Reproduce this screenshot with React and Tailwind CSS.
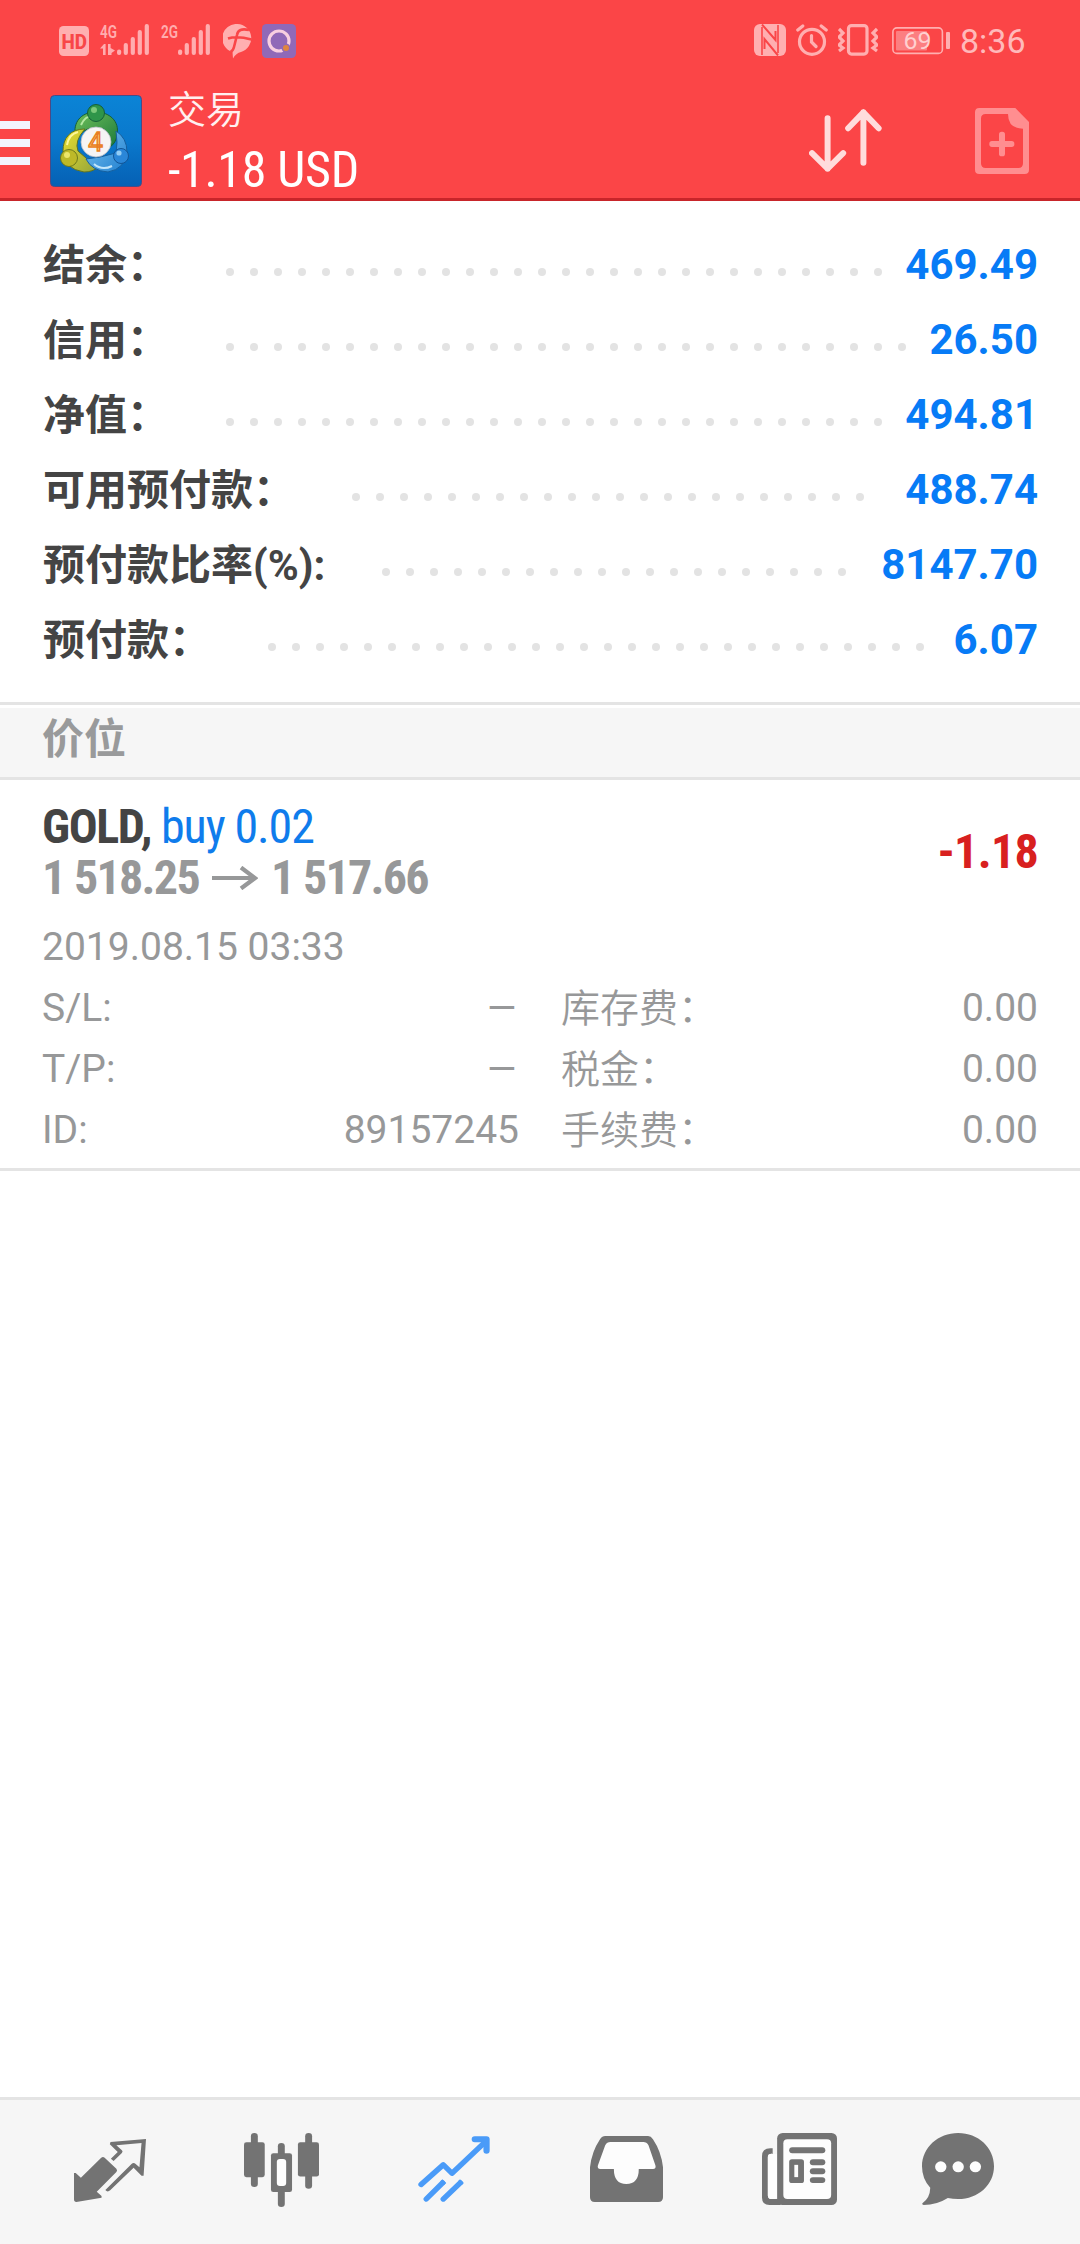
const account = [
  { label: "结余：", value: "469.49" },
  { label: "信用：", value: "26.50" },
  { label: "净值：", value: "494.81" },
  { label: "可用预付款：", value: "488.74" },
  { label: "预付款比率(%):", value: "8147.70" },
  { label: "预付款：", value: "6.07" },
];

const details = [
  { label: "S/L:", value: "–", feeLabel: "库存费：", fee: "0.00" },
  { label: "T/P:", value: "–", feeLabel: "税金：", fee: "0.00" },
  { label: "ID:", value: "89157245", feeLabel: "手续费：", fee: "0.00" },
];

const Signal = ({ label, data }) => (
  <svg viewBox="0 0 50 32" className="h-8 w-[50px] overflow-visible" fill="#ffadaf">
    <text
      x="0"
      y="14"
      fontSize="18"
      fontWeight="600"
      textLength="17"
      lengthAdjust="spacingAndGlyphs">
      {label}
    </text>
    {data && (
      <path d="M4 20l-4 4.500h3V31h2.600V20zM8 20h2.600v4l4.400 2.500-3.500 2.500V31H8z" />
    )}
    <rect x="17" y="25.500" width="4.200" height="5.500" rx="2" />
    <rect x="23.700" y="19" width="4.200" height="12" rx="2" />
    <rect x="30.700" y="13" width="4.200" height="18" rx="2" />
    <rect x="37.700" y="6" width="4.200" height="25" rx="2" />
    <rect x="44.700" y="0" width="4.200" height="31" rx="2" />
  </svg>
);

const StatusBar = () => (
  <div className="flex h-20 items-start pt-6">
    <svg viewBox="0 0 30 30" className="mt-0.5 ml-[59px] h-[30px] w-[30px]">
      <rect width="30" height="30" rx="4.500" fill="#ffafb0" />
      <text
        x="2.500"
        y="22.500"
        fontSize="21"
        fontWeight="800"
        fill="#f84648"
        textLength="25.500"
        lengthAdjust="spacingAndGlyphs">
        HD
      </text>
    </svg>
    <div className="ml-[11px]">
      <Signal label="4G" data />
    </div>
    <div className="ml-[11px]">
      <Signal label="2G" />
    </div>
    <svg viewBox="0 0 29 35" className="ml-3 h-[35px] w-[29px]">
      <path
        d="M14.500 0a14.300 14.300 0 0 1 3.500 28Q13 29 10 34.500L9.500 28A14.300 14.300 0 0 1 14.500 0z"
        fill="#ffafb0"
      />
      <path
        d="M26 6Q15 3.500 14 11L11 23Q10 27 7.500 28M5 14.500Q14 11.500 28.500 15.500"
        fill="none"
        stroke="#fa4648"
        strokeWidth="2.600"
      />
    </svg>
    <svg viewBox="0 0 34 34" className="ml-2.5 h-[34px] w-[34px]">
      <rect width="34" height="34" rx="4.500" fill="#9069b8" />
      <circle cx="17" cy="17" r="10" fill="none" stroke="#f8cfe0" strokeWidth="3.200" />
      <circle cx="24" cy="24" r="4.500" fill="#9069b8" />
      <circle cx="24" cy="24" r="3" fill="#e0863f" />
    </svg>

    <svg viewBox="0 0 32 32" className="ml-[458px] h-8 w-8">
      <rect width="32" height="32" rx="6" fill="#ffafb0" />
      <path
        d="M8 0.500L21.500 16V7M24 31.500L10.500 15V25"
        fill="none"
        stroke="#fa4648"
        strokeWidth="2"
      />
      <path
        d="M8 31V3M24 1V29"
        fill="none"
        stroke="#fa4648"
        strokeWidth="1.600"
      />
    </svg>
    <svg
      viewBox="0 0 32 32"
      className="ml-2.5 h-8 w-8"
      fill="none"
      stroke="#ffafb0"
      strokeWidth="3.200"
      strokeLinecap="round">
      <circle cx="16" cy="17.800" r="12.500" />
      <path d="M1.800 6L6.800 2M30.200 6L25.200 2M15.500 11.500V18l4.500 4.500" />
    </svg>
    <svg
      viewBox="0 0 40 32"
      className="ml-[10px] h-8 w-10"
      fill="none"
      stroke="#ffafb0"
      strokeWidth="3.200">
      <rect x="10.500" y="1.600" width="18.500" height="28.500" rx="3" />
      <path d="M1 5l4 4-4 4 4 4-4 4 4 3-4 3M39 5l-4 4 4 4-4 4 4 4-4 3 4 3" />
    </svg>
    <svg viewBox="0 0 58 28" className="mt-[3px] ml-3.5 h-7 w-[58px]">
      <rect
        x="0.900"
        y="0.900"
        width="49.500"
        height="25.500"
        rx="4"
        fill="none"
        stroke="#ffafb0"
        strokeWidth="1.600"
      />
      <rect x="4" y="4" width="31" height="19.500" rx="1" fill="#fc7f81" />
      <rect x="54" y="5" width="4" height="17" rx="1" fill="#ffafb0" />
      <text
        x="11.500"
        y="22"
        fontSize="24"
        fill="#ffd0d0"
        textLength="28"
        lengthAdjust="spacingAndGlyphs">
        69
      </text>
    </svg>
    <span className="ml-[10px] text-[34px] leading-[34px] text-[#ffb9ba]">8:36</span>
  </div>
);

const Logo = () => (
  <svg viewBox="0 0 92 92" className="mt-[15px] ml-5 h-[92px] w-[92px]">
    <defs>
      <linearGradient id="sky" x1="0" y1="0" x2="0" y2="1">
        <stop offset="0" stopColor="#0b84d6" />
        <stop offset="0.500" stopColor="#0a78cc" />
        <stop offset="1" stopColor="#0560b4" />
      </linearGradient>
      <linearGradient id="green" x1="0" y1="0" x2="1" y2="1">
        <stop offset="0" stopColor="#6fc05a" />
        <stop offset="1" stopColor="#1c7a3a" />
      </linearGradient>
      <linearGradient id="yellow" x1="0" y1="0" x2="1" y2="1">
        <stop offset="0" stopColor="#eadf2e" />
        <stop offset="1" stopColor="#93a43c" />
      </linearGradient>
      <linearGradient id="blue" x1="0" y1="0" x2="1" y2="1">
        <stop offset="0" stopColor="#7cc4f0" />
        <stop offset="1" stopColor="#1f7fd0" />
      </linearGradient>
    </defs>
    <rect x="0.500" y="0.500" width="91" height="91" rx="4" fill="url(#sky)" stroke="#4a4a86" />
    <path
      d="M25 38C24 25 33 17 46 17S70 26 67 40Q66 48 60 52L54 34H38L30 38z"
      fill="url(#green)"
      stroke="#155f38"
    />
    <path
      d="M35 34C20 34 13 43 13 56Q14 74 34 77Q43 77 48 72L36 63 28 56Q24 46 35 34z"
      fill="url(#yellow)"
      stroke="#5f7322"
    />
    <path
      d="M66 36Q77 43 77 57Q75 74 58 77Q42 76 36 64L50 62 66 58Q68 48 66 36z"
      fill="url(#blue)"
      stroke="#155f9e"
    />
    <path d="M31 30Q35 21 42 21" fill="none" stroke="#b5e8a2" strokeWidth="2" />
    <path d="M17 50Q19 39 28 37" fill="none" stroke="#fdf79a" strokeWidth="2" />
    <path d="M44 69Q52 76 62 71" fill="none" stroke="#c3e6fb" strokeWidth="2" />
    <circle cx="46" cy="18" r="8.500" fill="#2f9549" stroke="#155f38" />
    <circle cx="44" cy="15" r="3" fill="#7cc97a" />
    <circle cx="19" cy="63" r="8.500" fill="#bdb928" stroke="#6f7a1c" />
    <circle cx="17" cy="60" r="3" fill="#ece66a" />
    <circle cx="71" cy="61" r="7.500" fill="#2a86d8" stroke="#125596" />
    <circle cx="69" cy="58" r="2.600" fill="#93cdf5" />
    <circle cx="46" cy="47" r="15" fill="#f6f4f4" stroke="#b9bdc4" strokeWidth="0.800" />
    <text
      x="45.500"
      y="56"
      fontSize="26"
      textAnchor="middle"
      fill="#fbcf7c"
      stroke="#e97e22"
      strokeWidth="1.400">
      4
    </text>
  </svg>
);

const Header = () => (
  <header className="h-[201px] border-b-[3px] border-[#c8252a] bg-[#fb4547]">
    <StatusBar />
    <div className="flex items-start">
      <div className="mt-[41px] flex w-[30px] flex-col gap-2.5">
        <span className="h-2 bg-[#f3f3fd]" />
        <span className="h-2 bg-[#f3f3fd]" />
        <span className="h-2 bg-[#f3f3fd]" />
      </div>
      <Logo />
      <div className="mt-2 ml-[26px] w-[641px]">
        <div className="text-[38px] leading-[44px] font-[350] text-[#fff0f0]">交易</div>
        <div className="mt-[13px] text-[50px] leading-[50px] tracking-[-0.3px] text-white [font-stretch:75%]">
          -1.18 USD
        </div>
      </div>
      <svg
        viewBox="268 326 220 190"
        className="mt-[29px] h-[63px] w-[73px]"
        fill="none"
        stroke="#ffdcdc"
        strokeWidth="18"
        strokeLinecap="round"
        strokeLinejoin="round">
        <path d="M324 354V506M277 459L324 506 371 459M432 488V336M386 384L432 336 478 384" />
      </svg>
      <svg viewBox="765 324 162 198" className="mt-7 ml-[93px] h-[66px] w-[54px]" fill="#ff8e90">
        <path
          fillRule="evenodd"
          d="M778 324H886L927 366V509Q927 522 914 522H778Q765 522 765 509V337Q765 324 778 324ZM797 342Q783 342 783 356V490Q783 504 797 504H895Q909 504 909 490V386Q864 386 864 342Z"
        />
        <rect x="808" y="423" width="75" height="18" rx="8" />
        <rect x="837" y="395" width="18" height="74" rx="8" />
      </svg>
    </div>
  </header>
);

const AccountRow = ({ label, value }) => (
  <div className="flex h-[75px] items-center text-[42px] leading-[75px] font-bold">
    <span className="mt-0.5 text-[#444]">{label}</span>
    <div className="mt-3.5 mr-[22px] ml-[57px] flex h-2 flex-1 flex-wrap gap-x-4 overflow-hidden">
      {Array.from({ length: 30 }, (_, i) => (
        <span key={i} className="size-2 rounded-full bg-[#e3e3e3]" />
      ))}
    </div>
    <span className="text-[#077bf6]">{value}</span>
  </div>
);

const Position = () => (
  <section className="h-[391px] border-b-[3px] border-[#e4e4e4] pt-[21px] pr-[42px] pl-[42px] text-[39px] text-[#979899]">
    <div className="flex items-center justify-between text-[48px] [font-stretch:75%]">
      <div>
        <div className="h-[51px] leading-[51px] tracking-[-1.1px]">
          <span className="font-bold tracking-[-1.4px] text-[#444]">GOLD,</span>{" "}
          <span className="text-[#0f7cec]">buy 0.02</span>
        </div>
        <div className="flex h-[52px] items-center leading-[52px] font-bold tracking-[-1.7px]">
          <span>1 518.25</span>
          <svg
            viewBox="0 0 46 24"
            className="mx-[13px] h-6 w-[46px]"
            fill="none"
            stroke="#979899"
            strokeWidth="4.200">
            <path d="M0 12H43M29 1.500L43 12 29 22.500" />
          </svg>
          <span>1 517.66</span>
        </div>
      </div>
      <span className="mb-0.5 font-bold tracking-[-0.7px] text-[#d8201f]">-1.18</span>
    </div>
    <div className="mt-[13px] leading-[61px]">2019.08.15 03:33</div>
    {details.map((row) => (
      <div key={row.label} className="flex h-[61px] leading-[61px]">
        <div className="flex w-[477px] justify-between">
          <span>{row.label}</span>
          <span className={row.value === "–" ? "origin-right scale-x-[1.28]" : ""}>
            {row.value}
          </span>
        </div>
        <div className="ml-[42px] flex flex-1 justify-between">
          <span className="mt-px font-[350]">{row.feeLabel}</span>
          <span>{row.fee}</span>
        </div>
      </div>
    ))}
  </section>
);

const TabBar = () => (
  <nav className="flex h-[147px] items-start border-t-[3px] border-[#e4e4e4] bg-[#f6f6f6] text-[#737373]">
    {/* quotes */}
    <svg
      viewBox="215 177 209 189"
      preserveAspectRatio="none"
      className="mt-[39px] ml-[74px] h-[63px] w-[72px]"
      fill="currentColor">
      <path d="M294 233Q299 229 304 233L338 266Q342 271 338 276L281 335 295 348V353L222 366Q215 366 215 358V279H220L235 293Z" />
      <path d="M321 186L424 177 417 287H411L388 263 320 331Q312 338 306 330L382 252Q388 246 394 252L405 262 411 189 338 196 354 211Q358 215 354 219L330 243 322 236 342 216 319 193Z" />
    </svg>
    {/* charts */}
    <svg
      viewBox="709 158 217 223"
      preserveAspectRatio="none"
      className="mt-[33px] ml-[98px] h-[74px] w-[75px]"
      fill="currentColor">
      <rect x="729" y="158" width="20" height="163" rx="10" />
      <rect x="709" y="186" width="60" height="105" rx="7" />
      <rect x="807" y="188" width="20" height="193" rx="10" />
      <rect x="787" y="219" width="61" height="117" rx="7" />
      <rect x="804" y="236" width="27" height="82" rx="9" fill="#fdfdfd" />
      <rect x="886" y="158" width="20" height="168" rx="10" />
      <rect x="865" y="186" width="61" height="103" rx="7" />
    </svg>
    {/* trade */}
    <svg
      viewBox="1213 167 208 200"
      preserveAspectRatio="none"
      className="mt-9 ml-[99px] h-[66px] w-[72px]"
      fill="none"
      stroke="#4a9bf8"
      strokeWidth="16"
      strokeLinecap="round"
      strokeLinejoin="round">
      <path d="M1222 314L1286 254 1311 280 1408 184" />
      <path d="M1377 177H1411V212" strokeWidth="18" />
      <path d="M1237 358L1284 309M1286 358L1335 309" />
      <path d="M1283 310L1289 304M1334 310L1340 304" strokeLinecap="butt" />
    </svg>
    {/* history */}
    <svg
      viewBox="146 168 211 198"
      preserveAspectRatio="none"
      className="mt-9 ml-[100px] h-[66px] w-[73px]"
      fill="currentColor">
      <path d="M190 168H314Q322 168 328 178 352 215 357 262V352Q357 366 343 366H160Q146 366 146 352V262Q151 215 175 178 181 168 190 168Z" />
      <path
        d="M205 186H300Q310 186 315 196L335 256Q338 267 328 267H287Q287 312 251 312 215 312 215 267H176Q166 267 169 256L190 196Q195 186 205 186Z"
        fill="#fdfdfd"
      />
    </svg>
    {/* news */}
    <svg
      viewBox="646 158 218 217"
      preserveAspectRatio="none"
      className="mt-[33px] ml-[99px] h-[72px] w-[75px]"
      fill="currentColor">
      <path d="M677 204V221Q663 220 663 230V346Q663 357 675 357H700V375H668Q646 375 646 353V228Q646 204 670 204Z" />
      <path d="M677 221Q663 220 663 230V346Q663 357 675 357H680Q690 357 690 346V221Z" fill="#fdfdfd" />
      <rect x="690" y="158" width="174" height="217" rx="16" />
      <rect x="708" y="177" width="139" height="180" rx="12" fill="#fdfdfd" />
      <rect x="725" y="201" width="105" height="18" rx="9" />
      <rect x="725" y="237" width="43" height="72" rx="8" />
      <rect x="740" y="254" width="11" height="37" fill="#fdfdfd" />
      <rect x="785" y="237" width="45" height="18" rx="9" />
      <rect x="785" y="264" width="45" height="18" rx="9" />
      <rect x="785" y="291" width="45" height="18" rx="9" />
    </svg>
    {/* chat */}
    <svg
      viewBox="1109 158 209 217"
      preserveAspectRatio="none"
      className="mt-[33px] ml-[85px] h-[72px] w-[72px]"
      fill="currentColor">
      <path d="M1214 158C1272 158 1318 202 1318 258S1272 357 1214 357Q1198 357 1184 354 1152 375 1114 375 1107 374 1111 369 1132 354 1133 323 1109 296 1109 258C1109 202 1156 158 1214 158Z" />
      <g fill="#fdfdfd">
        <circle cx="1163.500" cy="260" r="16.500" />
        <circle cx="1214" cy="260" r="16.500" />
        <circle cx="1264" cy="260" r="16.500" />
      </g>
    </svg>
  </nav>
);

export default function App() {
  return (
    <div className="flex h-[2244px] w-[1080px] flex-col overflow-hidden bg-white font-['Roboto','Noto_Sans_CJK_SC',sans-serif]">
      <Header />
      <section className="h-[504px] border-b-[3px] border-[#e4e4e4] pt-[26px] pr-[42px] pl-[43px]">
        {account.map((row) => (
          <AccountRow key={row.label} {...row} />
        ))}
      </section>
      <div className="mt-[3px] h-[72px] border-b-[3px] border-[#e4e4e4] bg-[#f6f6f6] pl-[42px] text-[42px] leading-[64px] font-bold text-[#999a9b]">
        价位
      </div>
      <Position />
      <div className="flex-1" />
      <TabBar />
    </div>
  );
}
